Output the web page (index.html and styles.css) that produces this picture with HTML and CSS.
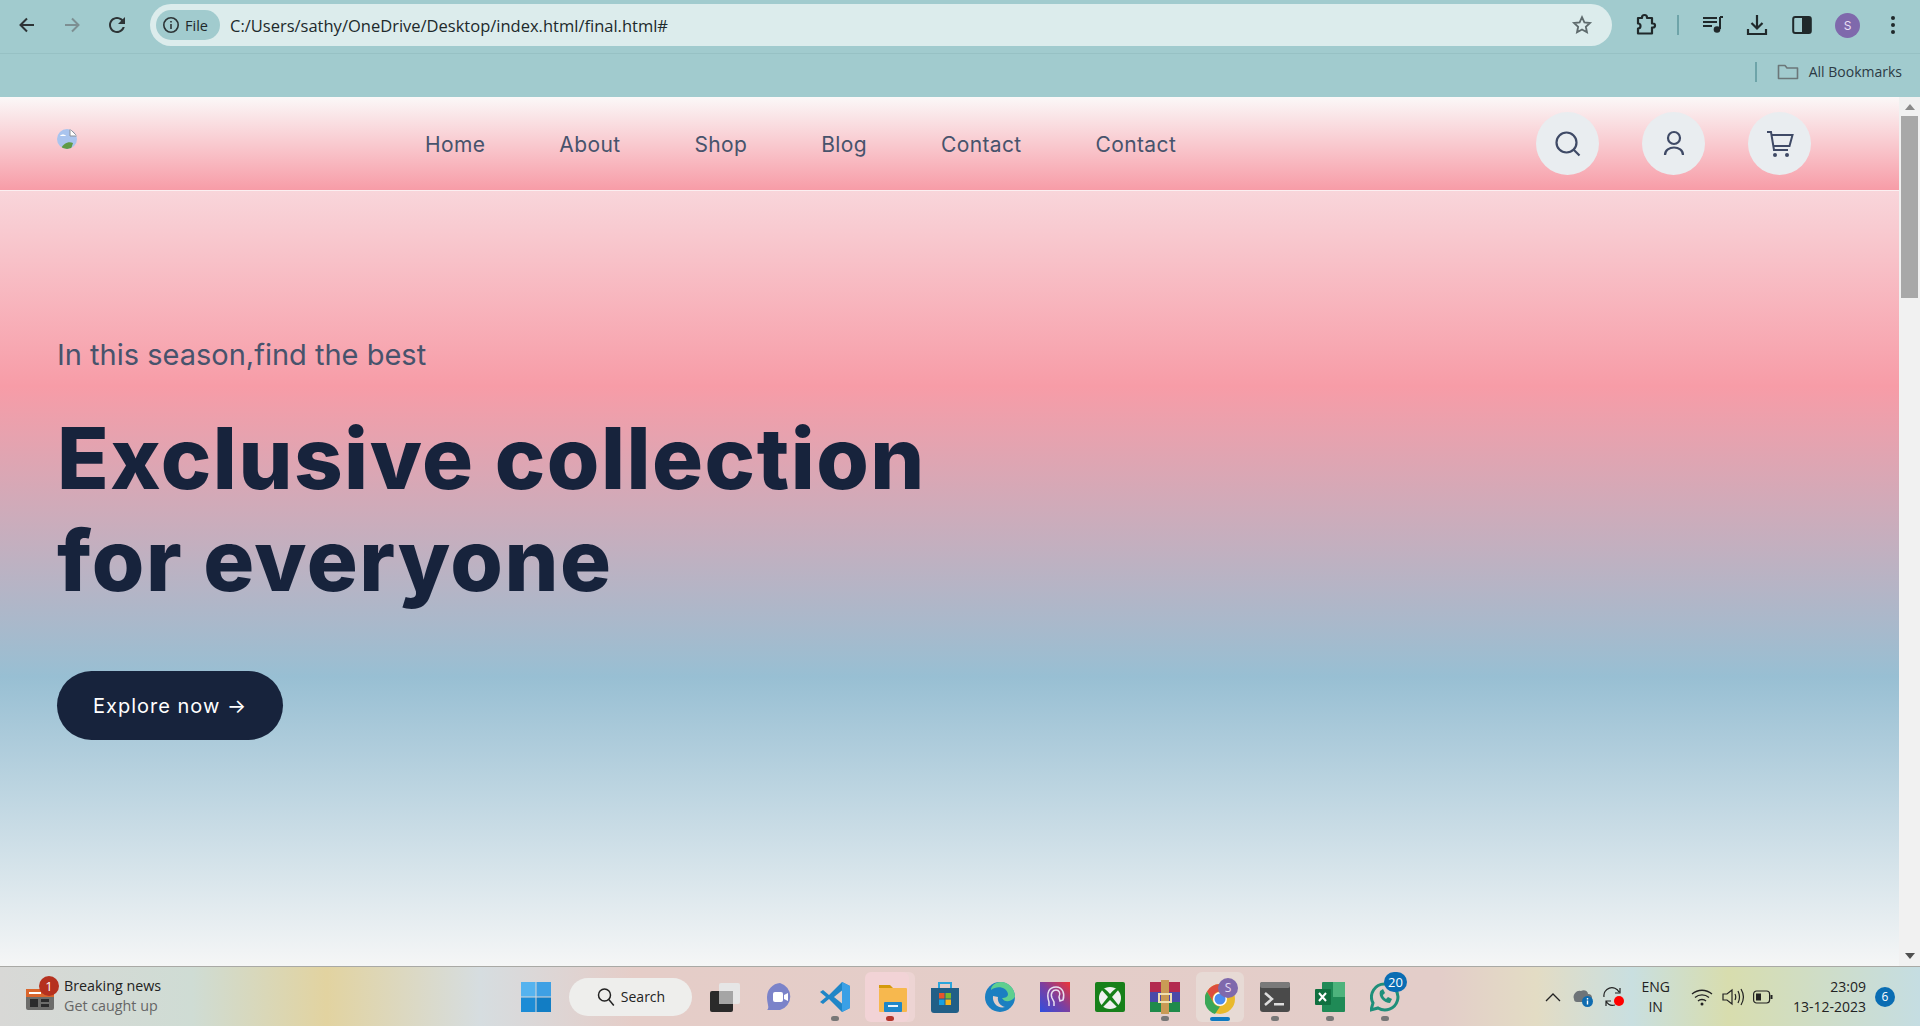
FILE: index.html

```html
<!DOCTYPE html>
<html lang="en">
<head>
  <meta charset="UTF-8">
  <title>final.html</title>
  <link rel="stylesheet" href="styles.css">
</head>
<body>

  <!-- browser toolbar -->
  <div class="toolbar">
    <div class="nav-btns">
      <svg class="tb-icon" viewBox="0 0 24 24"><path d="M19 12H6M12 5.500L5.500 12l6.500 6.500" fill="none" stroke="#2d3436" stroke-width="2"/></svg>
      <svg class="tb-icon" viewBox="0 0 24 24"><path d="M5 12h13M12 5.500l6.500 6.500-6.500 6.500" fill="none" stroke="#7d8f92" stroke-width="2"/></svg>
      <svg class="tb-icon" viewBox="0 0 24 24"><path fill="#2d3436" d="M17.650 6.350C16.200 4.900 14.210 4 12 4c-4.420 0-7.990 3.580-7.990 8s3.570 8 7.990 8c3.730 0 6.840-2.550 7.730-6h-2.080c-.82 2.330-3.040 4-5.650 4-3.310 0-6-2.690-6-6s2.690-6 6-6c1.660 0 3.140.69 4.220 1.780L13 11h7V4l-2.350 2.350z"/></svg>
    </div>
    <div class="omnibox">
      <div class="chip">
        <svg width="18" height="18" viewBox="0 0 18 18"><circle cx="9" cy="9" r="7.200" fill="none" stroke="#2d3436" stroke-width="1.600"/><path d="M9 8v5M9 5v1.600" stroke="#2d3436" stroke-width="1.600"/></svg>
        <span>File</span>
      </div>
      <span class="url">C:/Users/sathy/OneDrive/Desktop/index.html/final.html#</span>
      <svg class="star" width="22" height="22" viewBox="0 0 24 24"><path d="M12 3.500l2.600 5.600 6.100.7-4.500 4.100 1.200 6L12 16.900l-5.400 3 1.200-6-4.500-4.100 6.100-.7z" fill="none" stroke="#5f6b6d" stroke-width="2"/></svg>
    </div>
    <div class="tb-right">
      <svg class="ext" width="24" height="24" viewBox="0 0 24 24"><path d="M9 4.500V4a2.500 2.500 0 0 1 5 0v.5h5v5.500h1a2 2 0 0 1 0 4h-1v6H5v-5a2.500 2.500 0 0 0 0-5V4.500z" transform="translate(0 .5)" fill="none" stroke="#20292b" stroke-width="2.200" stroke-linejoin="round"/></svg>
      <i class="tb-sep"></i>
      <svg class="media" width="24" height="24" viewBox="0 0 24 24"><path d="M2 5h14M2 9h14M2 13h9" stroke="#20292b" stroke-width="2"/><path d="M19 4v12" stroke="#20292b" stroke-width="2"/><circle cx="16" cy="16.500" r="3.300" fill="#20292b"/><path d="M19 4h3" stroke="#20292b" stroke-width="2"/></svg>
      <svg class="dl" width="24" height="24" viewBox="0 0 24 24"><path d="M12 2v13M6.500 10l5.500 5.500 5.500-5.500M3 16v5h18v-5" fill="none" stroke="#20292b" stroke-width="2.200"/></svg>
      <svg class="side" width="20" height="20" viewBox="0 0 20 20"><rect x="1.200" y="2" width="17.600" height="16" rx="2" fill="none" stroke="#20292b" stroke-width="2"/><rect x="10" y="2" width="9" height="16" fill="#20292b"/></svg>
      <div class="avatar">S</div>
      <svg class="dots" width="6" height="20" viewBox="0 0 6 20"><circle cx="3" cy="3" r="2" fill="#20292b"/><circle cx="3" cy="10" r="2" fill="#20292b"/><circle cx="3" cy="17" r="2" fill="#20292b"/></svg>
    </div>
  </div>

  <div class="bookmarks">
    <i class="bm-sep"></i>
    <svg width="22" height="18" viewBox="0 0 22 18"><path d="M1.500 15.500V2.500h6.500l2 2.500h10.500v10.500z" fill="none" stroke="#6b7779" stroke-width="1.600" stroke-linejoin="round"/></svg>
    <span>All Bookmarks</span>
  </div>

  <!-- the page itself -->
  <div class="viewport">
    <div class="page">
      <header class="site-header">
        <div class="logo">
          <svg width="20" height="20" viewBox="0 0 20 20"><rect width="20" height="20" fill="#a9c4ee"/><path d="M3 7c1-2 5-2 6 0z" fill="#fff"/><path d="M4 20c2-6 8-8 12-6l-2 6z" fill="#5f9a45"/><path d="M13 0l7 7h-7z" fill="#fff" stroke="#8a8f96"/></svg>
        </div>
        <nav class="menu">
          <a href="#">Home</a>
          <a href="#">About</a>
          <a href="#">Shop</a>
          <a href="#">Blog</a>
          <a href="#">Contact</a>
          <a href="#">Contact</a>
        </nav>
        <div class="header-icons">
          <div class="round-btn">
            <svg width="28" height="28" viewBox="0 0 28 28"><circle cx="12.500" cy="12.500" r="10" fill="none" stroke="#3f4a66" stroke-width="2.200"/><path d="M19.500 19.500l6 6" stroke="#3f4a66" stroke-width="2.200"/></svg>
          </div>
          <div class="round-btn">
            <svg width="28" height="28" viewBox="0 0 28 28"><circle cx="14" cy="8" r="6" fill="none" stroke="#3f4a66" stroke-width="2.200"/><path d="M5 25c0-10 18-10 18 0" fill="none" stroke="#3f4a66" stroke-width="2.200"/></svg>
          </div>
          <div class="round-btn">
            <svg width="28" height="28" viewBox="0 0 28 28"><path d="M1 2h4l3 18h14M5.500 5h21l-3 11H7.500" fill="none" stroke="#3f4a66" stroke-width="2"/><circle cx="9" cy="25" r="2" fill="#3f4a66"/><circle cx="21" cy="25" r="2" fill="#3f4a66"/></svg>
          </div>
        </div>
      </header>
      <section class="hero">
        <p class="hero-sub">In this season,find the best</p>
        <h1>Exclusive collection<br>for everyone</h1>
        <a class="explore" href="#">Explore now &rarr;</a>
      </section>
    </div>
    <div class="scrollbar">
      <i class="arrow-up"></i>
      <div class="thumb"></div>
      <i class="arrow-down"></i>
    </div>
  </div>

  <!-- windows taskbar -->
  <div class="taskbar">
    <div class="news">
      <div class="news-icon">
        <svg width="28" height="24" viewBox="0 0 28 24"><rect y="3" width="28" height="21" rx="2" fill="#6d6d6b"/><rect width="28" height="8" y="3" fill="#d9662d"/><rect x="3" y="6" width="12" height="2" fill="#fff"/><rect x="4" y="13" width="8" height="8" fill="#2b2b2b"/><rect x="15" y="13" width="8" height="3" fill="#2b2b2b"/><rect x="15" y="18" width="8" height="3" fill="#2b2b2b"/></svg>
        <b>1</b>
      </div>
      <div class="news-text">
        <span>Breaking news</span>
        <span class="news-sub">Get caught up</span>
      </div>
    </div>
    <div class="apps">
      <svg class="win" width="30" height="30" viewBox="0 0 30 30"><rect width="14.500" height="14.500" fill="#55b3ef"/><rect x="15.500" width="14.500" height="14.500" fill="#3fa0e4"/><rect y="15.500" width="14.500" height="14.500" fill="#1c8cd6"/><rect x="15.500" y="15.500" width="14.500" height="14.500" fill="#127dc4"/></svg>
      <div class="search-pill">
        <svg width="20" height="20" viewBox="0 0 20 20"><circle cx="8.500" cy="8" r="6" fill="none" stroke="#222" stroke-width="1.500"/><path d="M12.800 12.500l5 6" stroke="#222" stroke-width="1.500"/></svg>
        <span>Search</span>
      </div>
      <div class="app">
        <svg width="30" height="30" viewBox="0 0 30 30"><rect x="9" y="1" width="21" height="21" rx="2" fill="#e6e6e6"/><rect y="9" width="23" height="21" rx="2" fill="#2a2a2a"/><rect x="9" y="9" width="14" height="13" fill="#a5a5a5"/></svg>
      </div>
      <div class="app">
        <svg width="30" height="30" viewBox="0 0 30 30"><path d="M15 1a14 14 0 0 1 0 27H2c3-2 0-6 0-13A14 14 0 0 1 15 1z" fill="#7b83c9"/><rect x="8" y="10" width="10" height="10" rx="2" fill="#fff"/><path d="M19 13l4-2v8l-4-2z" fill="#fff"/></svg>
      </div>
      <div class="app has-dot">
        <svg width="32" height="32" viewBox="0 0 32 32"><path d="M23 1l8 4v22l-8 4L10 18l-6 5-3-2 6-5-6-5 3-2 6 5z" fill="#1f86c7"/><path d="M23 1l8 4v22l-8 4z" fill="#3aa0e6"/><path d="M23 9.500L15 16l8 6.500z" fill="#e2cfca"/></svg>
      </div>
      <div class="app active-red has-dot dot-red">
        <svg width="30" height="30" viewBox="0 0 30 30"><path d="M1 3h11l3 3H1z" fill="#d49a0c"/><rect x="1" y="6" width="28" height="24" rx="1" fill="#f7b84e"/><rect x="6" y="20" width="18" height="10" rx="1" fill="#1e87c9"/><rect x="10" y="23" width="10" height="2" fill="#e9f4fb"/></svg>
      </div>
      <div class="app">
        <svg width="30" height="34" viewBox="0 0 30 34"><path d="M9 8V3h12v5" fill="none" stroke="#2aa5dc" stroke-width="2"/><path d="M1 8h28v22a3 3 0 0 1-3 3H4a3 3 0 0 1-3-3z" fill="#215f87"/><rect x="9" y="13" width="5.500" height="5.500" fill="#e8552b"/><rect x="15.500" y="13" width="5.500" height="5.500" fill="#7cb92f"/><rect x="9" y="19.500" width="5.500" height="5.500" fill="#16a0e2"/><rect x="15.500" y="19.500" width="5.500" height="5.500" fill="#f7b51c"/></svg>
      </div>
      <div class="app">
        <svg width="32" height="32" viewBox="0 0 32 32"><circle cx="16" cy="16" r="15" fill="#1b7fc1"/><path d="M31 16c0-8-6-15-14-15C11 1 7 5 7 9c6-5 16-3 17 4 0 3-3 4-6 4 2 4 8 5 13-1z" fill="#5fcf8f"/><path d="M9 15c-1 7 5 13 12 11-5-1-8-6-7-10z" fill="#e2cfca"/></svg>
      </div>
      <div class="app">
        <svg width="30" height="30" viewBox="0 0 30 30"><defs><linearGradient id="appGrad" x1="0" y1="1" x2="1" y2="0"><stop offset="0" stop-color="#2f4fe0"/><stop offset=".5" stop-color="#7c3fa0"/><stop offset="1" stop-color="#ef3535"/></linearGradient></defs><rect width="30" height="30" fill="url(#appGrad)"/><path d="M9 24v-4c-3-9 0-15 7-15s9 7 7 13l-3 1-1-4c2-4 0-7-3-7s-6 3-4 8l2 4v4" fill="none" stroke="#e9dff0" stroke-width="1.500"/></svg>
      </div>
      <div class="app">
        <svg width="30" height="30" viewBox="0 0 30 30"><rect width="30" height="30" rx="2" fill="#17801a"/><circle cx="15" cy="16" r="11" fill="#f1f1f1"/><path d="M15 12c-4-5-8-7-10-6l8 9-8 10 2 1 8-8 8 8 2-1-8-10 8-9c-2-1-6 1-10 6z" fill="#17801a"/></svg>
      </div>
      <div class="app has-dot">
        <svg width="30" height="34" viewBox="0 0 30 34"><rect y="2" width="30" height="10" fill="#b32a4f"/><rect y="12" width="30" height="10" fill="#4a4aa8"/><rect y="22" width="30" height="10" fill="#1f8a4a"/><rect x="11" y="0" width="8" height="34" fill="#c99a55"/><rect x="9" y="14" width="12" height="8" fill="none" stroke="#f0e0b0" stroke-width="2"/></svg>
      </div>
      <div class="app active-chrome has-bar">
        <svg width="34" height="38" viewBox="0 0 34 38"><circle cx="15" cy="21" r="15" fill="#e9b92c"/><path d="M15 6a15 15 0 0 1 13 7.500H15a7.500 7.500 0 0 0-6.500 11.200L2 13.500A15 15 0 0 1 15 6z" fill="#dc4d3e"/><path d="M2 13.500l6.500 11.200A7.500 7.500 0 0 0 15 28.500L10 36A15 15 0 0 1 2 13.500z" fill="#3aa757"/><circle cx="15" cy="21" r="7" fill="#fff"/><circle cx="15" cy="21" r="5.500" fill="#4a8df0"/><circle cx="23" cy="10" r="10" fill="#7f69ac"/><text class="mini-s" x="23" y="14" text-anchor="middle">S</text></svg>
      </div>
      <div class="app has-dot">
        <svg width="30" height="30" viewBox="0 0 30 30"><rect width="30" height="30" rx="3" fill="#4a4a4a"/><rect width="30" height="6" rx="2" fill="#7a7a7a"/><path d="M5 11l7 6-7 6" fill="none" stroke="#ddd" stroke-width="2.500"/><rect x="14" y="21" width="10" height="2.500" fill="#ddd"/></svg>
      </div>
      <div class="app has-dot">
        <svg width="30" height="32" viewBox="0 0 30 32"><rect x="7" y="1" width="23" height="30" rx="1" fill="#1f8a56"/><rect x="18" y="1" width="12" height="15" fill="#4db37c"/><rect y="8" width="16" height="16" rx="1" fill="#107040"/><path d="M4 12l7 8M11 12l-7 8" stroke="#fff" stroke-width="2"/></svg>
      </div>
      <div class="app has-dot wa">
        <svg width="30" height="34" viewBox="0 0 30 34"><path d="M15 4a13 13 0 1 1-7 24l-7 2 2-7A13 13 0 0 1 15 4z" fill="none" stroke="#1f8f7a" stroke-width="3"/><path d="M10 11c-2 6 4 12 10 12l2-4-4-2-2 2c-2-1-3-3-3-4l2-2-2-4z" fill="#1f8f7a"/></svg>
        <b class="wa-badge">20</b>
      </div>
    </div>
    <div class="tray">
      <svg class="tray-chev" width="16" height="10" viewBox="0 0 16 10"><path d="M1 9l7-7 7 7" fill="none" stroke="#222" stroke-width="1.300"/></svg>
      <svg class="tray-cloud" width="22" height="22" viewBox="0 0 22 22"><path d="M2 13a6 6 0 0 1 7-8c3-2 7 0 7 3a4 4 0 0 1 0 8H5a3 3 0 0 1-3-3z" fill="#6e7478"/><circle cx="15.500" cy="15.500" r="5.500" fill="#0f6cb0"/><path d="M15.500 14.500v4M15.500 12v1.400" stroke="#fff" stroke-width="1.400"/></svg>
      <svg class="tray-sync" width="22" height="22" viewBox="0 0 22 22"><path d="M1 11A8 8 0 0 1 16 6M17 2v5h-5M3 20v-5h5M3 15c2 4 5 5 9 4" fill="none" stroke="#222" stroke-width="1.200"/><circle cx="16" cy="15" r="5" fill="#f00"/></svg>
      <div class="lang"><span>ENG</span><span>IN</span></div>
      <svg class="tray-wifi" width="22" height="18" viewBox="0 0 22 18"><path d="M1 6c6-5 14-5 20 0M4 9.500c4-3.500 10-3.500 14 0M7 13c2-2 6-2 8 0" fill="none" stroke="#222" stroke-width="1.300"/><circle cx="11" cy="16" r="1.500" fill="#222"/></svg>
      <svg class="tray-vol" width="22" height="20" viewBox="0 0 22 20"><path d="M1 7h4l5-4v14l-5-4H1z" fill="none" stroke="#222" stroke-width="1.200"/><path d="M13 7c1 2 1 4 0 6M16 4c2 4 2 8 0 12M19 2c3 5 3 11 0 16" fill="none" stroke="#222" stroke-width="1.200"/></svg>
      <svg class="tray-bat" width="20" height="14" viewBox="0 0 20 14"><rect x=".6" y="1" width="16" height="12" rx="3" fill="none" stroke="#222" stroke-width="1.200"/><rect x="3" y="3.500" width="5" height="7" fill="#222"/><rect x="17.500" y="5" width="2" height="4" fill="#222"/></svg>
      <div class="clock"><span>23:09</span><span>13-12-2023</span></div>
      <div class="notif">6</div>
    </div>
  </div>

</body>
</html>
```

FILE: styles.css

```css
* { box-sizing: border-box; }
html, body { height: 100%; }
body {
  margin: 0;
  height: 1026px;
  overflow: hidden;
  display: flex;
  flex-direction: column;
  font-family: 'Inter', 'Noto Sans', sans-serif;
  background: #a1cbce;
}
svg { display: block; flex: none; }

/* browser chrome */
.toolbar {
  height: 54px;
  display: flex;
  align-items: center;
  padding: 0 0 5px 15px;
  border-bottom: 1px solid #97c1c4;
  background: #a1cbce;
}
.nav-btns {
  display: flex;
  gap: 21px;
  width: 135px;
  margin-top: 2px;
}
.tb-icon { width: 24px; height: 24px; }
.omnibox {
  width: 1462px;
  height: 42px;
  margin-top: 2px;
  border-radius: 21px;
  background: #dcecec;
  display: flex;
  align-items: center;
  padding: 0 19px 0 6px;
  font-family: 'Open Sans', sans-serif;
}
.chip {
  width: 64px;
  height: 30px;
  border-radius: 15px;
  background: #a1cbce;
  display: flex;
  align-items: center;
  gap: 5px;
  padding-left: 6px;
  font-size: 14.5px;
  color: #20292b;
  flex: none;
}
.url {
  margin-left: 10px;
  font-size: 16.500px;
  color: #20292b;
  flex: 1;
  white-space: nowrap;
}
.tb-right {
  display: flex;
  align-items: center;
  margin-top: 2px;
  margin-left: 21px;
}
.tb-sep {
  width: 2px;
  height: 20px;
  background: #6ea4a9;
  margin: 0 22px 0 20px;
}
.dl { margin-left: 20px; }
.side { margin-left: 23px; }
.avatar {
  width: 25px;
  height: 25px;
  margin-left: 23px;
  border-radius: 50%;
  background: #7f69ac;
  color: #eadff5;
  font-size: 12px;
  line-height: 25px;
  text-align: center;
}
.dots { margin-left: 30px; }
.bookmarks {
  height: 43px;
  display: flex;
  align-items: center;
  justify-content: flex-end;
  padding: 0 18px 8px 0;
  font-family: 'Open Sans', sans-serif;
  font-size: 14px;
  color: #2c3a44;
  background: #a1cbce;
}
.bm-sep {
  width: 2px;
  height: 20px;
  background: #6ea4a9;
  margin-right: 20px;
}
.bookmarks span { margin-left: 10px; }

/* page */
.viewport {
  height: 870px;
  display: flex;
  border-bottom: 1px solid #a9a9a5;
}
.page {
  flex: 1;
  background: linear-gradient(180deg, #f9f1f3 0, #f79ca7 33.300%, #98bfd3 66.700%, #f5f6f6 100%);
}
.site-header {
  height: 94px;
  display: flex;
  align-items: center;
  padding: 0 0 0 57px;
  background: linear-gradient(180deg, #fbf8f8 0%, #f79ca7 100%);
  border-bottom: 1px solid #fbeff1;
  position: relative;
}
.logo {
  width: 20px;
  height: 20px;
  margin: -10px 0 0 0;
  border-radius: 50%;
  overflow: hidden;
  flex: none;
}
.menu {
  display: flex;
  gap: 74px;
  margin: 2px 0 0 348px;
}
.menu a {
  color: #47536c;
  font-size: 21px;
  letter-spacing: .37px;
  text-decoration: none;
}
.header-icons {
  display: flex;
  gap: 43px;
  margin-left: auto;
  margin-right: 88px;
}
.round-btn {
  width: 63px;
  height: 63px;
  border-radius: 50%;
  background: #e9edf0;
  display: flex;
  align-items: center;
  justify-content: center;
}
.hero { padding: 147px 0 0 57px; }
.hero-sub {
  margin: 0;
  font-size: 29px;
  line-height: 34px;
  color: #47536c;
}
h1 {
  margin: 36px 0 0;
  font-size: 85px;
  line-height: 102px;
  font-weight: 800;
  letter-spacing: 1.500px;
  color: #17233c;
}
.explore {
  display: flex;
  align-items: center;
  justify-content: center;
  width: 226px;
  height: 69px;
  margin-top: 59px;
  border-radius: 35px;
  background: #17233c;
  color: #fff;
  font-size: 20px;
  letter-spacing: 1px;
  text-decoration: none;
}
.scrollbar {
  width: 21px;
  background: #f1f1f1;
  display: flex;
  flex-direction: column;
  align-items: center;
  padding: 7px 0;
  flex: none;
}
.thumb {
  width: 17px;
  height: 182px;
  margin-top: 6px;
  background: #a8a8a8;
}
.arrow-up, .arrow-down {
  width: 0;
  height: 0;
  border-left: 5px solid transparent;
  border-right: 5px solid transparent;
}
.arrow-up { border-bottom: 6px solid #8a8a8a; }
.arrow-down { border-top: 6px solid #505050; margin-top: auto; }

/* taskbar */
.taskbar {
  flex: 1;
  display: flex;
  align-items: center;
  font-family: 'Open Sans', sans-serif;
  background: linear-gradient(90deg, #d8d8d6 0, #cfdcd4 10%, #e2d3a0 17%, #d6dde0 25%, #e5cdc8 33%, #e3cdc9 75%, #e3dcc4 80%, #c9dfe0 85%, #d8ddae 90%, #c5dde2 100%);
}
.news {
  width: 521px;
  display: flex;
  gap: 10px;
  padding-left: 26px;
  font-size: 14.300px;
  color: #222;
  flex: none;
  margin-top: -2px;
}
.news-icon { position: relative; margin-top: 10px; }
.news-icon b {
  position: absolute;
  top: -10px;
  left: 13px;
  width: 20px;
  height: 20px;
  border-radius: 50%;
  background: #b5311f;
  color: #fff;
  font-size: 13px;
  font-weight: 400;
  line-height: 20px;
  text-align: center;
}
.news-text { display: flex; flex-direction: column; line-height: 20px; }
.news-sub { color: #666; }
.apps { display: flex; align-items: center; }
.win { margin-right: 18px; }
.search-pill {
  width: 123px;
  height: 38px;
  border-radius: 19px;
  background: #eeeeec;
  display: flex;
  align-items: center;
  justify-content: center;
  gap: 5px;
  font-size: 14px;
  color: #222;
  margin-right: 5px;
}
.app {
  width: 55px;
  height: 50px;
  display: flex;
  align-items: center;
  justify-content: center;
  position: relative;
  border-radius: 6px;
}
.has-dot::after {
  content: "";
  position: absolute;
  bottom: 1px;
  left: 50%;
  width: 8px;
  height: 5px;
  margin-left: -4px;
  border-radius: 3px;
  background: #777;
}
.active-red {
  width: 44px;
  margin: 0 8.500px 0 2.500px;
  background: #f2d3d6;
  box-shadow: 6px 0 0 #edd4d3;
}
.active-red svg { margin-left: 6px; margin-right: -6px; }
.dot-red::after { background: #b5352c; margin-left: -1px; }
.active-chrome {
  width: 48px;
  margin: 0 3.500px;
  background: #e7dad5;
}
.active-chrome svg { margin-left: 4px; }
.has-bar::after {
  content: "";
  position: absolute;
  bottom: 1px;
  left: 50%;
  width: 20px;
  height: 4px;
  margin-left: -10px;
  border-radius: 2px;
  background: #0f7ac2;
}
.mini-s { font-size: 12px; fill: #e6dcf3; }
.wa-badge {
  position: absolute;
  top: 0;
  right: 5px;
  min-width: 23px;
  height: 20px;
  border-radius: 10px;
  background: #0a6db3;
  color: #fff;
  font-size: 13px;
  font-weight: 400;
  line-height: 20px;
  text-align: center;
}
.tray {
  margin-left: auto;
  display: flex;
  align-items: center;
  padding-right: 25px;
  font-size: 14px;
  color: #222;
}
.tray-cloud { margin-left: 11px; }
.tray-sync { margin-left: 9px; }
.lang {
  display: flex;
  flex-direction: column;
  align-items: center;
  line-height: 20px;
  margin-left: 16px;
}
.tray-wifi { margin-left: 21px; }
.tray-vol { margin-left: 9px; }
.tray-bat { margin-left: 9px; }
.clock {
  display: flex;
  flex-direction: column;
  align-items: flex-end;
  line-height: 20px;
  margin-left: 20px;
}
.notif {
  width: 20px;
  height: 20px;
  margin-left: 9px;
  border-radius: 50%;
  background: #0a6db3;
  color: #fff;
  font-size: 12px;
  line-height: 20px;
  text-align: center;
}
```
